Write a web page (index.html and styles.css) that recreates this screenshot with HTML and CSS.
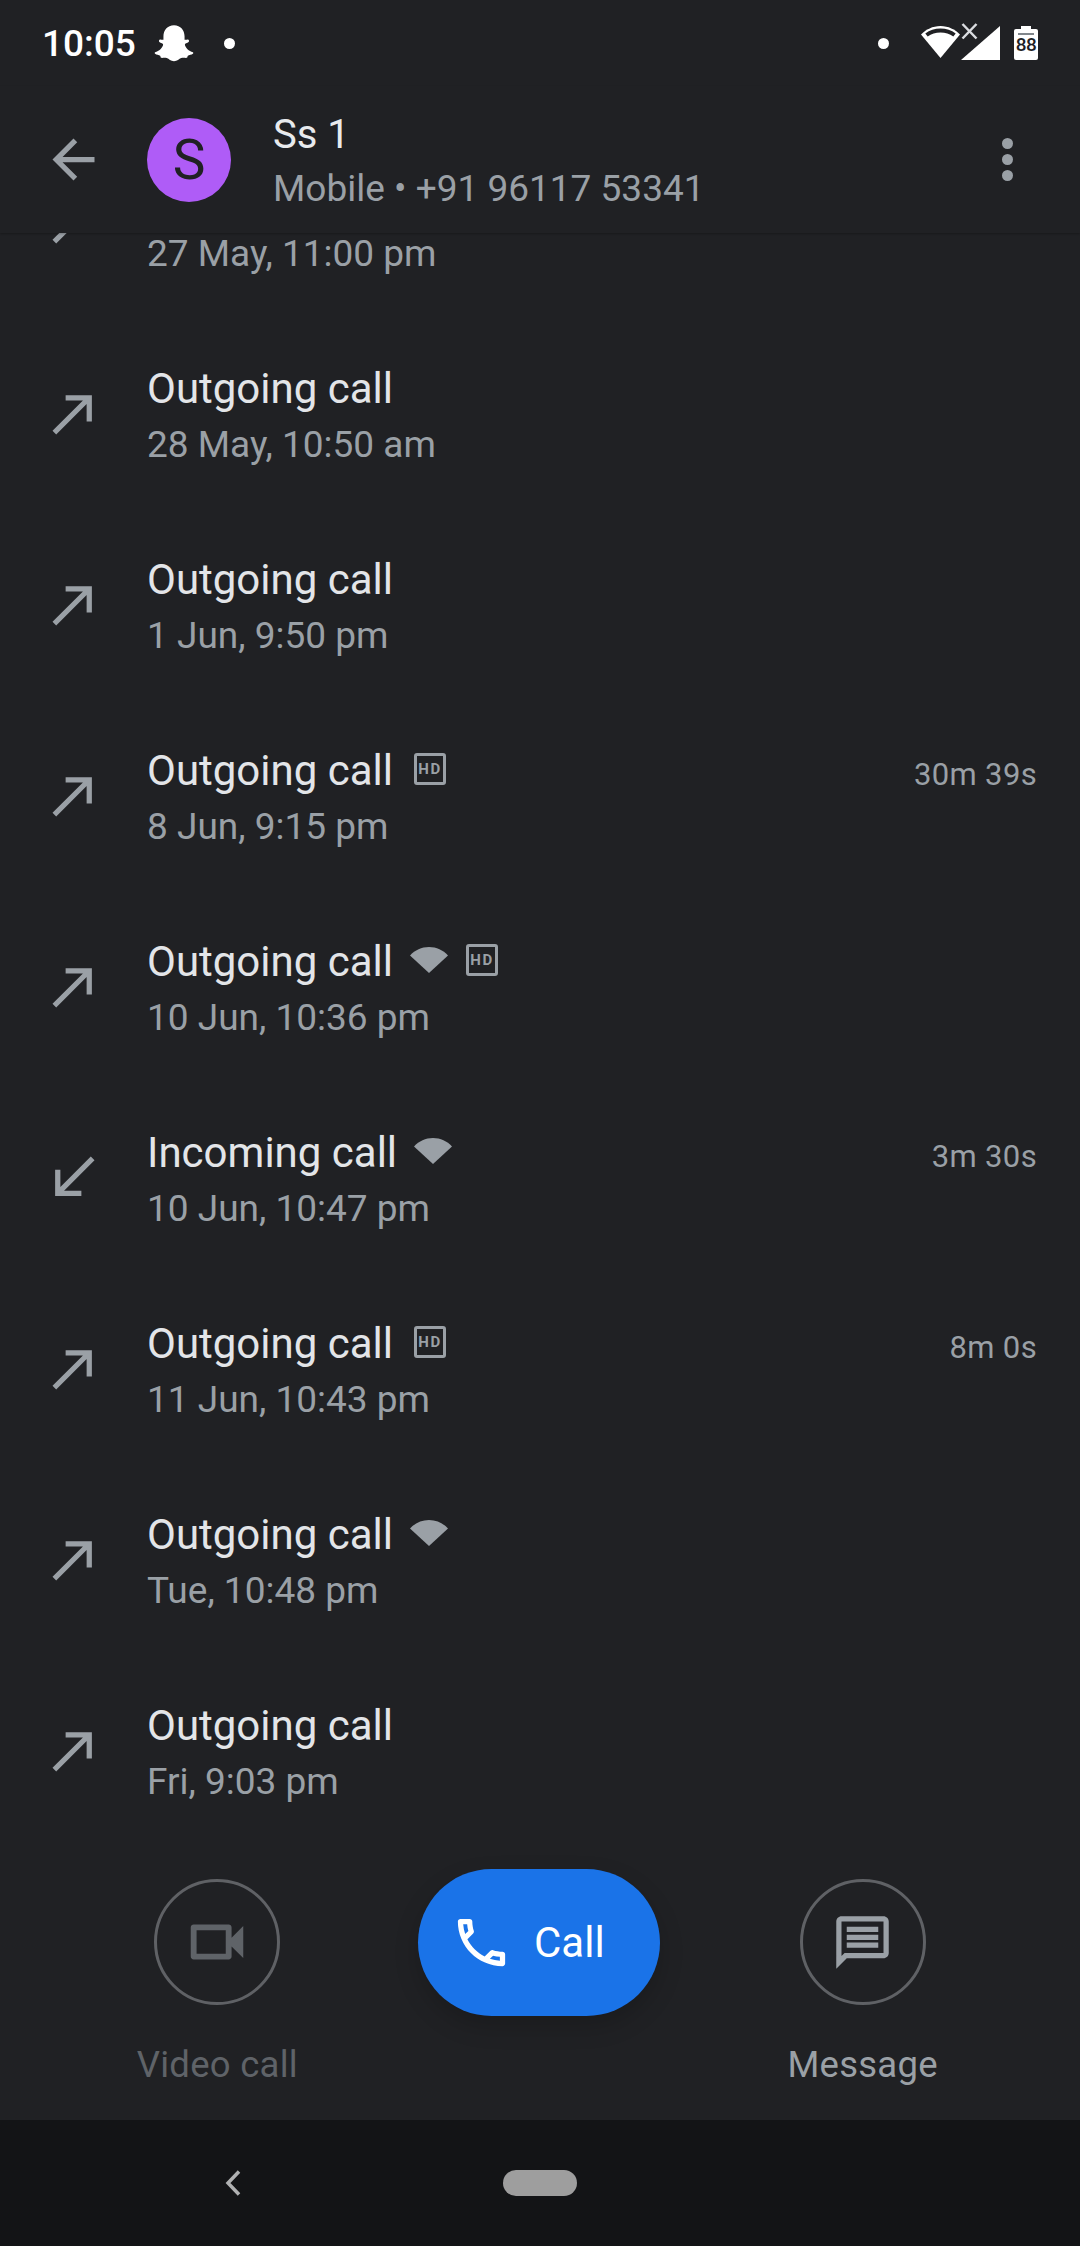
FILE: index.html
```html
<!DOCTYPE html>
<html lang="en">
<head>
    <meta charset="UTF-8">
    <title>Call details</title>
    <link rel="stylesheet" href="styles.css">
</head>
<body>
<svg class="icon-defs" width="0" height="0">
    <symbol id="call-made" viewBox="0 0 24 24"><path d="M9 5v2h6.59L4 18.59 5.41 20 17 8.41V15h2V5z"/></symbol>
    <symbol id="call-received" viewBox="0 0 24 24"><path d="M20 5.41L18.59 4 7 15.59V9H5v10h10v-2H8.41z"/></symbol>
    <symbol id="wifi" viewBox="0 0 38 26"><path d="M0 8.500C5 3 11.500 0 19 0s14 3 19 8.500L19 26z"/></symbol>
</svg>

<div class="phone">
    <!-- status bar -->
    <div class="status-bar">
        <div class="status-left">
            <span class="status-time">10:05</span>
            <svg class="status-ghost" viewBox="0 0 36 36"><path d="M18 2C24 2 27.500 6.500 27.500 12L27.500 15C28.500 15.500 30 14.600 31 15C32 15.600 31.600 17 30.500 17.500C29.500 18 28 18.300 27.800 19.300C28 22 31.500 25.500 35 26.300C35.500 26.500 35.400 27.300 35 27.700C33.800 28.700 31.500 28.800 30.500 29.400C30 30 30.200 31 29.600 31.300C28.500 31.600 26.500 31 24.500 31.600C22.500 32.300 21 34.500 18 34.500C15 34.500 13.500 32.300 11.500 31.600C9.500 31 7.500 31.600 6.400 31.300C5.800 31 6 30 5.500 29.400C4.500 28.800 2.200 28.700 1 27.700C.6 27.300 .5 26.500 1 26.300C4.500 25.500 8 22 8.200 19.300C8 18.300 6.500 18 5.500 17.500C4.400 17 4 15.600 5 15C6 14.600 7.500 15.500 8.500 15L8.500 12C8.500 6.500 12 2 18 2Z"/></svg>
            <span class="status-dot status-dot-left"></span>
        </div>
        <div class="status-right">
            <span class="status-dot"></span>
            <svg class="status-network" viewBox="0 0 80 36">
                <path class="net-white" d="M0 9.500C5 4.500 11.500 1 19.500 1S34 4.500 39 9.500L19.500 33z"/>
                <path class="net-gap" d="M5.500 10C9.500 7 14 5.500 19.500 5.500s10 1.500 14 4.500"/>
                <path class="net-white" d="M79 1v34H40z"/>
                <path class="net-x" d="M41.500 -1l14 14.500M55.500 -1l-14 14.500"/>
            </svg>
            <div class="status-battery"><span class="battery-level"></span><span class="battery-text">88</span></div>
        </div>
    </div>

    <!-- contact header -->
    <div class="contact-bar">
        <svg class="bar-icon" viewBox="0 0 24 24"><path d="M20 11H7.830l5.590-5.590L12 4l-8 8 8 8 1.410-1.410L7.830 13H20v-2z"/></svg>
        <div class="avatar">S</div>
        <div class="contact-info">
            <div class="contact-name">Ss 1</div>
            <div class="contact-number">Mobile • +91 96117 53341</div>
        </div>
        <div class="more-menu"><span></span><span></span><span></span></div>
    </div>

    <!-- call history -->
    <div class="call-list">
        <div class="call-list-inner">
            <div class="call-row">
                <svg class="call-arrow"><use href="#call-made"/></svg>
                <div class="call-text">
                    <div class="call-title"></div>
                    <div class="call-date">27 May, 11:00 pm</div>
                </div>
            </div>
            <div class="call-row">
                <svg class="call-arrow"><use href="#call-made"/></svg>
                <div class="call-text">
                    <div class="call-title">Outgoing call</div>
                    <div class="call-date">28 May, 10:50 am</div>
                </div>
            </div>
            <div class="call-row">
                <svg class="call-arrow"><use href="#call-made"/></svg>
                <div class="call-text">
                    <div class="call-title">Outgoing call</div>
                    <div class="call-date">1 Jun, 9:50 pm</div>
                </div>
            </div>
            <div class="call-row">
                <svg class="call-arrow"><use href="#call-made"/></svg>
                <div class="call-text">
                    <div class="call-title">Outgoing call <span class="hd-badge">HD</span></div>
                    <div class="call-date">8 Jun, 9:15 pm</div>
                </div>
                <div class="call-length">30m 39s</div>
            </div>
            <div class="call-row">
                <svg class="call-arrow"><use href="#call-made"/></svg>
                <div class="call-text">
                    <div class="call-title">Outgoing call <svg class="wifi-badge"><use href="#wifi"/></svg><span class="hd-badge">HD</span></div>
                    <div class="call-date">10 Jun, 10:36 pm</div>
                </div>
            </div>
            <div class="call-row">
                <svg class="call-arrow"><use href="#call-received"/></svg>
                <div class="call-text">
                    <div class="call-title">Incoming call <svg class="wifi-badge"><use href="#wifi"/></svg></div>
                    <div class="call-date">10 Jun, 10:47 pm</div>
                </div>
                <div class="call-length">3m 30s</div>
            </div>
            <div class="call-row">
                <svg class="call-arrow"><use href="#call-made"/></svg>
                <div class="call-text">
                    <div class="call-title">Outgoing call <span class="hd-badge">HD</span></div>
                    <div class="call-date">11 Jun, 10:43 pm</div>
                </div>
                <div class="call-length">8m 0s</div>
            </div>
            <div class="call-row">
                <svg class="call-arrow"><use href="#call-made"/></svg>
                <div class="call-text">
                    <div class="call-title">Outgoing call <svg class="wifi-badge"><use href="#wifi"/></svg></div>
                    <div class="call-date">Tue, 10:48 pm</div>
                </div>
            </div>
            <div class="call-row">
                <svg class="call-arrow"><use href="#call-made"/></svg>
                <div class="call-text">
                    <div class="call-title">Outgoing call</div>
                    <div class="call-date">Fri, 9:03 pm</div>
                </div>
            </div>
        </div>
    </div>

    <!-- actions -->
    <div class="action-bar">
        <div class="action action-off">
            <div class="action-circle">
                <svg viewBox="0 0 24 24"><path d="M15 8v8H5V8h10m1-2H4c-.55 0-1 .45-1 1v10c0 .55.45 1 1 1h12c.55 0 1-.45 1-1v-3.500l4 4v-11l-4 4V7c0-.55-.45-1-1-1z"/></svg>
            </div>
            <div class="action-label">Video call</div>
        </div>
        <div class="call-cell">
            <div class="call-button">
                <svg viewBox="0 0 24 24"><path d="M6.540 5c.06.89.21 1.760.45 2.590l-1.200 1.200c-.41-1.200-.67-2.470-.76-3.790h1.510m9.860 12.020c.85.24 1.720.39 2.600.45v1.490c-1.320-.09-2.590-.35-3.800-.75l1.200-1.190M7.500 3H4c-.55 0-1 .45-1 1 0 9.390 7.610 17 17 17 .55 0 1-.45 1-1v-3.490c0-.55-.45-1-1-1-1.240 0-2.450-.2-3.570-.57-.1-.04-.21-.05-.31-.05-.26 0-.51.1-.71.29l-2.200 2.200c-2.830-1.450-5.150-3.760-6.590-6.590l2.200-2.200c.28-.28.36-.67.25-1.020C8.700 6.450 8.500 5.250 8.500 4c0-.55-.45-1-1-1z"/></svg>
                <span>Call</span>
            </div>
        </div>
        <div class="action">
            <div class="action-circle">
                <svg viewBox="0 0 24 24"><path d="M20 4v12H5.170L4 17.170V4h16m0-2H4c-1.100 0-1.990.9-1.990 2L2 22l4-4h14c1.100 0 2-.9 2-2V4c0-1.100-.9-2-2-2zm-2 10H6v2h12v-2zm0-3H6v2h12V9zm0-3H6v2h12V6z"/></svg>
            </div>
            <div class="action-label">Message</div>
        </div>
    </div>

    <!-- navigation bar -->
    <div class="nav-bar">
        <svg class="nav-back" viewBox="0 0 16 26"><path d="M14 1.500L3 13l11 11.500"/></svg>
        <div class="nav-home"></div>
    </div>
</div>
</body>
</html>
```

FILE: styles.css
```css
* {
    box-sizing: border-box;
}
html, body {
    margin: 0px;
    padding: 0px;
    background: #202124;
}
.icon-defs {
    position: absolute;
}
.phone {
    width: 1080px;
    height: 2246px;
    display: flex;
    flex-direction: column;
    overflow: hidden;
    background: #202124;
    font-family: Roboto, "Liberation Sans", sans-serif;
    color: #e8eaed;
}

/* status bar */
.status-bar {
    height: 86px;
    flex: none;
    padding: 0px 42px 0px 42px;
    display: flex;
    align-items: center;
    justify-content: space-between;
    color: #ffffff;
}
.status-left, .status-right {
    display: flex;
    align-items: center;
}
.status-time {
    font-size: 37px;
    font-weight: 500;
}
.status-ghost {
    width: 40px;
    height: 40px;
    margin-left: 18px;
    fill: #ffffff;
}
.status-dot {
    width: 11px;
    height: 11px;
    border-radius: 50%;
    background: #ffffff;
}
.status-dot-left {
    margin-left: 30px;
}
.status-network {
    width: 80px;
    height: 36px;
    margin-left: 32px;
    overflow: visible;
}
.net-white {
    fill: #ffffff;
}
.net-gap {
    fill: none;
    stroke: #202124;
    stroke-width: 4;
}
.net-x {
    fill: none;
    stroke: #dadce0;
    stroke-width: 2.500;
}
.status-battery {
    position: relative;
    width: 24px;
    height: 31px;
    margin-left: 13px;
    margin-top: 3px;
    border-radius: 2px;
    background: #ffffff;
    text-align: center;
}
.status-battery::before {
    content: "";
    position: absolute;
    left: 7px;
    top: -3px;
    width: 10px;
    height: 3px;
    background: #ffffff;
}
.battery-level {
    position: absolute;
    left: 4px;
    top: 4px;
    width: 16px;
    height: 2px;
    background: #80868b;
}
.battery-text {
    position: absolute;
    left: 0px;
    right: 0px;
    top: 7px;
    font-size: 19px;
    line-height: 17px;
    font-weight: 500;
    letter-spacing: -0.5px;
    color: #202124;
}

/* contact header */
.contact-bar {
    height: 147px;
    flex: none;
    padding: 0px 42px 0px 42px;
    display: flex;
    align-items: center;
    position: relative;
    z-index: 2;
    background: #202124;
    box-shadow: 0px 1px 2px rgba(0, 0, 0, 0.25);
}
.bar-icon {
    width: 63px;
    height: 63px;
    flex: none;
    fill: #9aa0a6;
}
.avatar {
    width: 84px;
    height: 84px;
    flex: none;
    margin-left: 42px;
    border-radius: 50%;
    background: #af5cf7;
    color: #202124;
    font-size: 55px;
    line-height: 84px;
    text-align: center;
}
.contact-info {
    flex: 1;
    margin-left: 42px;
    padding-top: 3px;
}
.contact-name {
    font-size: 40px;
    line-height: 56px;
    color: #e8eaed;
}
.contact-number {
    font-size: 37px;
    line-height: 52px;
    color: #9aa0a6;
}
.more-menu {
    width: 63px;
    display: flex;
    flex-direction: column;
    align-items: center;
    gap: 5px;
    margin-right: -1px;
}
.more-menu span {
    width: 11px;
    height: 11px;
    border-radius: 50%;
    background: #9aa0a6;
}

/* call history */
.call-list {
    flex: 1;
    overflow: hidden;
}
.call-list-inner {
    margin-top: -106px;
}
.call-row {
    height: 191px;
    padding: 0px 43px 0px 42px;
    display: flex;
    align-items: center;
}
.call-arrow {
    width: 63px;
    height: 63px;
    flex: none;
    fill: #9aa0a6;
}
.call-text {
    flex: 1;
    margin-left: 42px;
    padding-top: 6px;
}
.call-title {
    display: flex;
    align-items: center;
    height: 56px;
    font-size: 42px;
    line-height: 56px;
    color: #e3e5e8;
}
.call-date {
    font-size: 37px;
    line-height: 56px;
    color: #9aa0a6;
}
.call-length {
    align-self: flex-start;
    margin-top: 52px;
    font-size: 31px;
    line-height: 46px;
    letter-spacing: 0.35px;
    color: #9aa0a6;
}
.hd-badge {
    width: 32px;
    height: 32px;
    margin-left: 21px;
    margin-top: -3px;
    border: 3px solid #9aa0a6;
    border-radius: 3px;
    font-size: 15px;
    line-height: 26px;
    font-weight: 700;
    letter-spacing: 1.5px;
    text-align: center;
    color: #9aa0a6;
}
.wifi-badge {
    width: 38px;
    height: 26px;
    margin-left: 17px;
    margin-top: -3px;
    fill: #9aa0a6;
}
.wifi-badge + .hd-badge {
    margin-left: 18px;
}

/* actions */
.action-bar {
    height: 280px;
    flex: none;
    padding: 0px 56px;
    display: grid;
    grid-template-columns: 1fr 1fr 1fr;
}
.action {
    padding-top: 39px;
    display: flex;
    flex-direction: column;
    align-items: center;
}
.action-circle {
    width: 126px;
    height: 126px;
    border: 3px solid #5f6165;
    border-radius: 50%;
    display: flex;
    align-items: center;
    justify-content: center;
}
.action-circle svg {
    width: 63px;
    height: 63px;
    fill: #9aa0a6;
}
.action-label {
    margin-top: 36px;
    font-size: 36.5px;
    line-height: 48px;
    letter-spacing: 0.25px;
    color: #9aa0a6;
}
.action-off .action-circle svg {
    width: 70px;
    height: 70px;
    fill: #5f6368;
}
.action-off .action-label {
    color: #5f6368;
}
.call-cell {
    padding-top: 29px;
    display: flex;
    justify-content: center;
}
.call-button {
    width: 242px;
    height: 147px;
    margin-left: -2px;
    padding-left: 32px;
    display: flex;
    align-items: center;
    gap: 21px;
    border-radius: 74px;
    background: #1a73e8;
    box-shadow: 0px 10px 24px rgba(0, 0, 0, 0.18);
    color: #ffffff;
    font-size: 42px;
}
.call-button svg {
    width: 63px;
    height: 63px;
    flex: none;
    fill: #ffffff;
}

/* navigation bar */
.nav-bar {
    height: 126px;
    flex: none;
    display: flex;
    align-items: center;
    padding-left: 225px;
    background: #131416;
}
.nav-back {
    width: 16px;
    height: 26px;
    fill: none;
    stroke: #b0b1b2;
    stroke-width: 3.500;
}
.nav-home {
    width: 74px;
    height: 26px;
    margin-left: 262px;
    border-radius: 13px;
    background: #9e9e9e;
}
```
